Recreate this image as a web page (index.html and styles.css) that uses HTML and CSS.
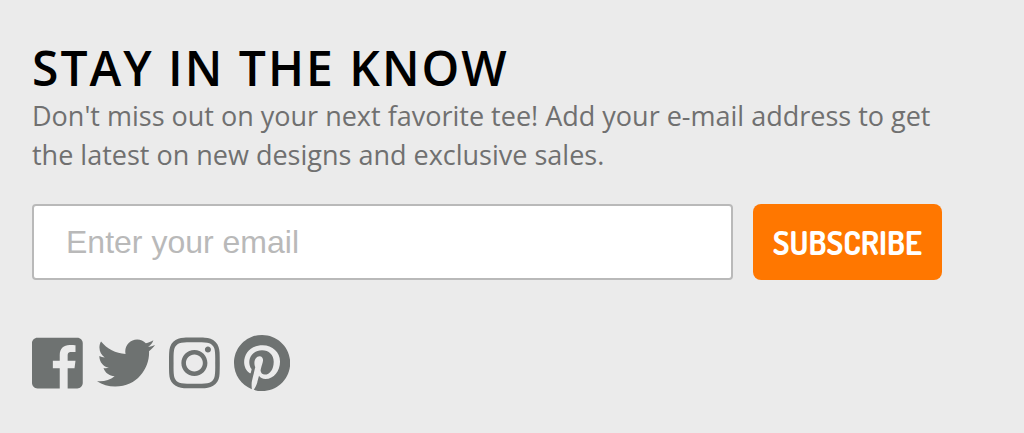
FILE: index.html
```html
<!DOCTYPE html>
<html lang="en">
<head>
  <meta charset="UTF-8" />
  <meta name="viewport" content="width=device-width, initial-scale=1.0"/>
  <title>Stay in the Know</title>
  <link rel="stylesheet" href="styles.css">
</head>
<body>
  <section class="newsletter">
    <h2>Stay in the Know</h2>
    <p>Don't miss out on your next favorite tee! Add your e-mail address to get the latest on new designs and exclusive sales.</p>

    <!-- Signup form -->
    <form class="signup-form">
      <input type="email" name="email" placeholder="Enter your email" aria-label="Enter your email">
      <button type="submit">Subscribe</button>
    </form>

    <!-- Social links -->
    <ul class="social-links">
      <li>
        <a href="#" aria-label="Facebook">
          <svg viewBox="0 0 448 512"><path d="M448 80v352c0 26.500-21.500 48-48 48h-85.300V302.800h60.600l8.700-67.600h-69.300V192c0-19.600 5.400-32.900 33.500-32.900H384V98.700c-6.200-.8-27.400-2.700-52.200-2.700-51.600 0-87 31.500-87 89.400v49.900H184v67.600h60.900V480H48c-26.500 0-48-21.500-48-48V80c0-26.500 21.500-48 48-48h352c26.500 0 48 21.500 48 48z"/></svg>
        </a>
      </li>
      <li>
        <a href="#" aria-label="Twitter">
          <svg viewBox="0 0 512 512"><path d="M459.370 151.716c.325 4.548.325 9.097.325 13.645 0 138.720-105.583 298.558-298.558 298.558-59.452 0-114.680-17.219-161.137-47.106 8.447.974 16.568 1.299 25.340 1.299 49.055 0 94.213-16.568 130.274-44.832-46.132-.975-84.792-31.188-98.112-72.772 6.498.974 12.995 1.624 19.818 1.624 9.421 0 18.843-1.300 27.614-3.573-48.081-9.747-84.143-51.980-84.143-102.985v-1.299c13.969 7.797 30.214 12.670 47.431 13.319-28.264-18.843-46.781-51.005-46.781-87.391 0-19.492 5.197-37.360 14.294-52.954 51.655 63.675 129.300 105.258 216.365 109.807-1.624-7.797-2.599-15.918-2.599-24.040 0-57.828 46.782-104.934 104.934-104.934 30.213 0 57.502 12.670 76.670 33.137 23.715-4.548 46.456-13.320 66.599-25.340-7.798 24.366-24.366 44.833-46.132 57.827 21.117-2.273 41.584-8.122 60.426-16.243-14.292 20.791-32.161 39.308-52.628 54.253z"/></svg>
        </a>
      </li>
      <li>
        <a href="#" aria-label="Instagram">
          <svg viewBox="0 0 448 512"><path d="M224.100 141c-63.600 0-114.900 51.300-114.900 114.900s51.300 114.900 114.900 114.900S339 319.500 339 255.900 287.700 141 224.100 141zm0 189.600c-41.100 0-74.700-33.500-74.700-74.700s33.500-74.700 74.700-74.700 74.700 33.500 74.700 74.700-33.600 74.700-74.700 74.700zm146.400-194.300c0 14.900-12 26.800-26.800 26.800-14.900 0-26.800-12-26.800-26.800s12-26.800 26.800-26.800 26.800 12 26.800 26.800zm76.100 27.200c-1.700-35.900-9.900-67.700-36.200-93.900-26.200-26.200-58-34.400-93.900-36.200-37-2.100-147.900-2.100-184.900 0-35.800 1.700-67.600 9.900-93.900 36.100s-34.400 58-36.200 93.900c-2.100 37-2.100 147.900 0 184.900 1.700 35.900 9.900 67.700 36.200 93.900s58 34.400 93.900 36.200c37 2.100 147.900 2.100 184.900 0 35.900-1.700 67.700-9.900 93.900-36.200 26.200-26.200 34.400-58 36.200-93.900 2.100-37 2.100-147.800 0-184.800zM398.800 388c-7.800 19.600-22.900 34.700-42.600 42.600-29.500 11.700-99.500 9-132.100 9s-102.700 2.600-132.100-9c-19.600-7.800-34.700-22.900-42.600-42.600-11.700-29.500-9-99.500-9-132.100s-2.600-102.700 9-132.100c7.800-19.600 22.900-34.700 42.600-42.600 29.500-11.700 99.500-9 132.100-9s102.700-2.600 132.100 9c19.600 7.800 34.700 22.900 42.600 42.600 11.700 29.500 9 99.500 9 132.100s2.700 102.700-9 132.100z"/></svg>
        </a>
      </li>
      <li>
        <a href="#" aria-label="Pinterest">
          <svg viewBox="0 0 496 512"><path d="M496 256c0 137-111 248-248 248-25.600 0-50.200-3.900-73.400-11.100 10.100-16.500 25.200-43.500 30.800-65 3-11.600 15.400-59 15.400-59 8.100 15.400 31.700 28.500 56.800 28.500 74.800 0 128.700-68.800 128.700-154.300 0-81.900-66.900-143.200-152.900-143.200-107 0-163.900 71.800-163.900 150.100 0 36.400 19.400 81.700 50.300 96.100 4.700 2.200 7.200 1.200 8.300-3.300.8-3.400 5-20.300 6.900-28.100.6-2.500.3-4.700-1.700-7.100-10.100-12.500-18.300-35.300-18.300-56.600 0-54.700 41.400-107.600 112-107.600 60.900 0 103.600 41.500 103.600 100.900 0 67.100-33.900 113.600-78 113.600-24.300 0-42.600-20.100-36.700-44.800 7-29.500 20.500-61.300 20.500-82.600 0-19-10.200-34.900-31.400-34.900-24.900 0-44.900 25.700-44.900 60.200 0 22 7.400 36.800 7.400 36.800s-24.500 103.800-29 123.200c-5 21.400-3 51.600-.9 71.200C65.400 450.900 0 361.100 0 256 0 119 111 8 248 8s248 111 248 248z"/></svg>
        </a>
      </li>
    </ul>
  </section>
</body>
</html>
```
FILE: styles.css
```css
:root {
  --background: #ebebeb;
  --text-color: #707070;
  --icon-color: #6e7271;
  --accent: #ff7700;
}

* {
  box-sizing: border-box;
}

body {
  margin: 0;
  background-color: var(--background);
  color: var(--text-color);
  font-family: "Open Sans", sans-serif;
}

.newsletter {
  padding: 40px 80px 40px 32px;
}

.newsletter h2 {
  margin: 0;
  color: #000;
  font-size: 48px;
  font-weight: 600;
  line-height: 56px;
  letter-spacing: 2px;
  text-transform: uppercase;
}

.newsletter p {
  margin: 0;
  font-size: 27px;
  line-height: 39px;
}

/* Signup form */
.signup-form {
  display: flex;
  gap: 20px;
  margin-top: 30px;
  padding-right: 2px;
}

.signup-form input {
  flex: 1;
  min-width: 0;
  height: 76px;
  padding: 0 32px;
  border: 2px solid #b9b9b9;
  border-radius: 4px;
  background-color: white;
  font-family: "Liberation Sans", Arial, sans-serif;
  font-size: 32px;
}

.signup-form input::placeholder {
  color: #b9b9b9;
}

.signup-form button {
  padding: 0 20px;
  border: none;
  border-radius: 8px;
  background-color: var(--accent);
  color: white;
  font-family: Dosis, "Liberation Sans Narrow", "Liberation Sans", sans-serif;
  font-size: 32px;
  font-weight: 700;
  text-transform: uppercase;
  cursor: pointer;
}

/* Social links */
.social-links {
  display: flex;
  gap: 14px;
  list-style: none;
  margin: 54px 0 0;
  padding: 0;
}

.social-links a {
  display: block;
  color: var(--icon-color);
}

.social-links svg {
  display: block;
  height: 58px;
  fill: currentColor;
}
```
